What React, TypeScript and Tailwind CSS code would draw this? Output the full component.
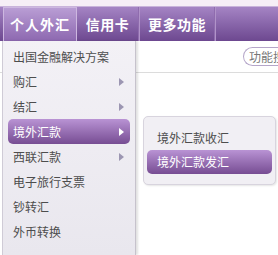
import React from "react";

const font = { fontFamily: '"Noto Sans CJK SC", "Noto Sans", sans-serif' };

function Arrow({ active }: { active?: boolean }) {
  return (
    <svg width="5" height="8" viewBox="0 0 5 8" className="shrink-0">
      <polygon points="0,0 5,4 0,8" fill={active ? "#ffffff" : "#9c96b2"} />
    </svg>
  );
}

const items: { label: string; arrow?: boolean; active?: boolean }[] = [
  { label: "出国金融解决方案" },
  { label: "购汇", arrow: true },
  { label: "结汇", arrow: true },
  { label: "境外汇款", arrow: true, active: true },
  { label: "西联汇款", arrow: true },
  { label: "电子旅行支票" },
  { label: "钞转汇" },
  { label: "外币转换" },
];

export default function App() {
  return (
    <div className="relative w-[278px] h-[255px] overflow-hidden bg-white" style={font}>
      <div className="h-[6px] bg-[#f6eef6]" />
      <div className="h-[35px] flex items-stretch bg-gradient-to-b from-[#a584c4] to-[#6d4890] border-t border-[#c9b3db]">
        <div className="w-[3px]" />
        <div className="w-[74px] flex items-center justify-center bg-gradient-to-b from-[#b99dd4] to-[#8d68b0] border-x border-t border-[#cdb7e0] text-white font-bold text-[14px] tracking-[1px]">
          个人外汇
        </div>
        <div className="w-[62px] flex items-center justify-center border-r border-[#8f6cae] text-white font-bold text-[14px] tracking-[0.5px]">
          信用卡
        </div>
        <div className="w-px bg-[#b093c9]" />
        <div className="w-[75px] flex items-center justify-center border-r border-[#8f6cae] text-white font-bold text-[14px] tracking-[0.5px]">
          更多功能
        </div>
        <div className="w-px bg-[#b093c9]" />
      </div>
      <div className="flex justify-end pt-[6px] pr-0 h-[32px] border-b border-[#dcdcdc]">
        <div className="w-[35px] h-[19px] rounded-l-full border border-r-0 border-[#b5a6c9] bg-white flex items-center pl-[5px] text-[12px] text-[#777] whitespace-nowrap overflow-hidden">
          功能搜
        </div>
      </div>

      <div className="absolute left-[2px] top-[41px] bottom-0 w-[134px] bg-gradient-to-b from-[#f3f1f6] to-[#e9e7ee] border-l border-[#cfcbd6] border-r border-r-[#c6c2cc] shadow-[2px_0_2px_rgba(0,0,0,0.12)] pt-[3px] px-[5px]">
        {items.map((it) => (
          <div
            key={it.label}
            className={
              it.active
                ? "h-[25px] flex items-center justify-between pl-[5px] pr-[6px] rounded-[5px] bg-gradient-to-b from-[#b993d4] to-[#774d93] text-white text-[12px]"
                : "h-[25px] flex items-center justify-between pl-[5px] pr-[6px] text-[#4d4d4d] text-[12px]"
            }
          >
            <span>{it.label}</span>
            {it.arrow && <Arrow active={it.active} />}
          </div>
        ))}
      </div>

      <div className="absolute left-[143px] top-[116px] w-[133px] h-[69px] rounded-[5px] border border-[#d8d4de] bg-[#f1eff4] shadow-[1px_1px_2px_rgba(0,0,0,0.1)] pt-[8px] px-[3px]">
        <div className="h-[25px] flex items-center pl-[10px] text-[12px] text-[#4d4d4d]">境外汇款收汇</div>
        <div className="h-[24px] flex items-center pl-[10px] rounded-[5px] bg-gradient-to-b from-[#b993d4] to-[#774d93] text-white text-[12px]">
          境外汇款发汇
        </div>
      </div>
    </div>
  );
}
